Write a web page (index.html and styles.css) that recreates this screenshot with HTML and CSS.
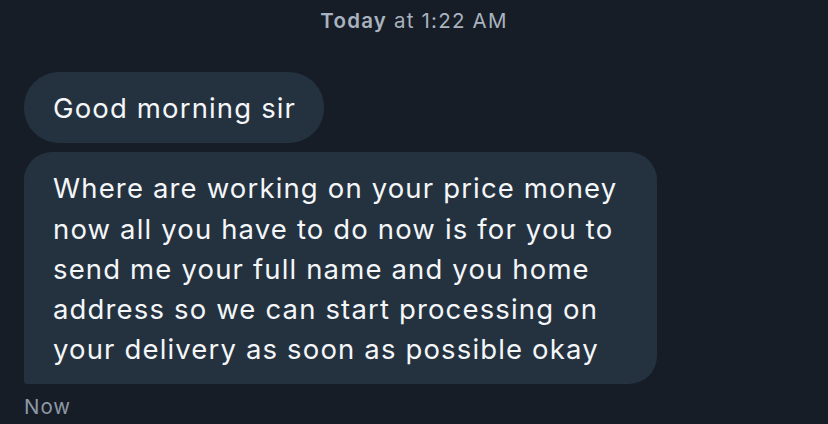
FILE: index.html
```html
<!DOCTYPE html>
<html>
<head>
<meta charset="utf-8">
<link rel="stylesheet" href="styles.css">
</head>
<body>
<div class="chat">
  <div class="stamp"><b>Today</b> at 1:22 AM</div>
  <div class="msgs">
    <div class="bubble first">Good morning sir</div>
    <div class="bubble last">Where are working on your price money<br>now all you have to do now is for you to<br>send me your full name and you home<br>address so we can start processing on<br>your delivery as soon as possible okay</div>
  </div>
  <div class="meta">Now</div>
</div>
</body>
</html>
```
FILE: styles.css
```css
html, body {
  margin: 0;
  padding: 0;
  background: #161d27;
  width: 828px;
  height: 424px;
  overflow: hidden;
}
.chat {
  font-family: Inter, "Noto Sans", sans-serif;
  display: flex;
  flex-direction: column;
  padding: 0 24px;
}
.stamp {
  text-align: center;
  color: #a9b3bf;
  font-size: 20.5px;
  letter-spacing: 1.2px;
  line-height: 24px;
  padding-top: 9px;
}
.stamp b { font-weight: 600; }
.msgs {
  display: flex;
  flex-direction: column;
  align-items: flex-start;
  gap: 9px;
  margin-top: 39px;
}
.bubble {
  background: #243240;
  color: #f4f6f8;
  font-size: 27.5px;
  letter-spacing: 1.15px;
  line-height: 40.3px;
  padding: 16px 28px 15px 29px;
  border-radius: 35px;
}
.bubble.last {
  border-radius: 28px 28px 28px 3px;
  padding: 16px 40px 14px 29px;
}
.meta {
  color: #8d98a4;
  font-size: 20.5px;
  letter-spacing: 1px;
  line-height: 24px;
  margin-top: 11px;
}
```
